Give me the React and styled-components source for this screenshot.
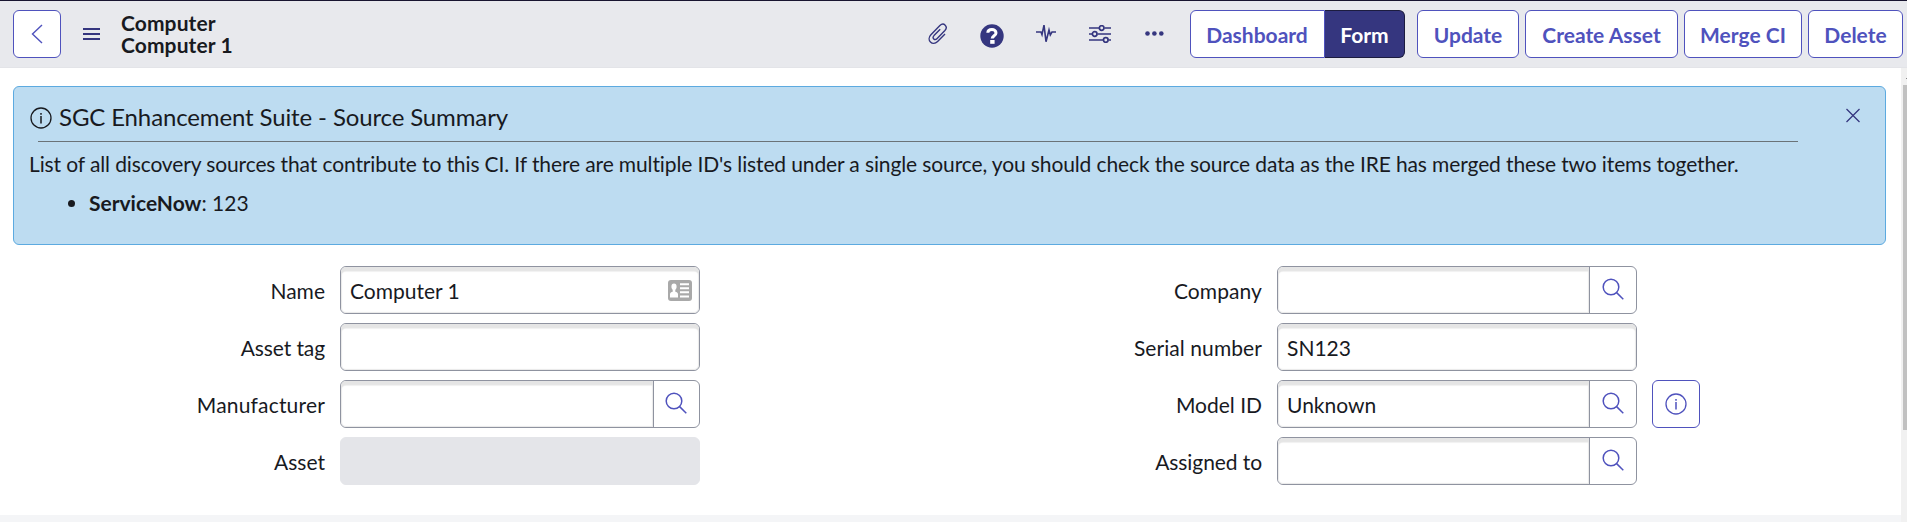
import React from "react";
import styled, { createGlobalStyle, css } from "styled-components";

const GlobalStyle = createGlobalStyle`
  * { box-sizing: border-box; }
  html, body { margin: 0; height: 522px; overflow: hidden; background: #fff; }
  body { font-family: Lato, "Liberation Sans", sans-serif; font-size: 21px; color: #181a1f; }
  button, input { font: inherit; color: inherit; margin: 0; outline: none; }
  svg { display: block; flex: none; }
`;

const Page = styled.div`
  height: 522px;
  display: flex;
  flex-direction: column;
`;

const Header = styled.header`
  height: 68px;
  flex: none;
  display: flex;
  align-items: flex-start;
  padding: 9px 4px 0 13px;
  background: #e8e9ed;
  border-top: 1px solid #181530;
  border-bottom: 1px solid #e3e4e8;
`;

const buttonBase = css`
  height: 48px;
  border: 1px solid #4f52bd;
  border-radius: 6px;
  background: #fff;
  color: #4f52bd;
  padding: 0;
  display: flex;
  align-items: center;
  justify-content: center;
`;

const IconButton = styled.button`
  ${buttonBase}
  width: 48px;
`;

const ActionButton = styled.button`
  ${buttonBase}
  width: ${(p) => p.$width}px;
  padding-top: 1px;
  font-weight: 700;
  white-space: nowrap;
`;

const TabButton = styled(ActionButton)`
  ${(p) =>
    p.$active
      ? css`
          background: #35367f;
          border-color: #1c1c3f;
          border-left-width: 0;
          color: #fff;
          border-radius: 0 6px 6px 0;
        `
      : css`
          border-radius: 6px 0 0 6px;
          padding-right: 1px;
        `}
`;

const MenuButton = styled.div`
  margin: 17px 0 0 22px;
  color: #35367f;
`;

const Title = styled.h1`
  margin: 2px 0 0 21px;
  font-size: 21px;
  line-height: 22px;
  letter-spacing: 0.1px;
  font-weight: 700;
  flex: 1;
`;

const Tools = styled.div`
  height: 48px;
  display: flex;
  align-items: flex-start;
  color: #35367f;
  margin-right: 27px;
`;

const Tabs = styled.div`
  display: flex;
  margin-right: 12px;
`;

const Actions = styled.div`
  display: flex;
  gap: 6px;
`;

const Tool = styled.div`
  width: ${(p) => p.$width || 24}px;
  margin-left: ${(p) => p.$gap}px;
  padding-top: ${(p) => p.$top}px;
`;

const Body = styled.div`
  flex: 1;
  min-height: 0;
  display: flex;
`;

const Content = styled.main`
  flex: 1;
  display: flex;
  flex-direction: column;
  padding: 18px 0 0;
`;

const ScrollTrack = styled.div`
  width: 6px;
  background: #f1f1f1;
  padding-left: 2px;
`;

const ScrollArrow = styled.div`
  width: 1px;
  height: 1px;
  margin: 10px 0 6px 3px;
  background: #8a8a8a;
`;

const ScrollThumb = styled.div`
  height: 345px;
  background: #c1c1c1;
`;

const Alert = styled.section`
  margin: 0 15px 0 13px;
  height: 159px;
  border: 1px solid #5caae0;
  border-radius: 6px;
  background: #bddcf1;
  display: flex;
  justify-content: space-between;
  padding: 0 25px 0 16px;
`;

const AlertText = styled.div`
  width: 1768px;
`;

const AlertTitle = styled.h2`
  margin: 0;
  height: 54px;
  padding-top: 7px;
  display: flex;
  align-items: center;
  gap: 7px;
  font-weight: 400;
  font-size: 24px;
  line-height: 30px;
  letter-spacing: -0.13px;
  white-space: nowrap;
`;

const TitleLabel = styled.span`
  margin-top: -1px;
`;

const Rule = styled.div`
  margin-left: 8px;
  height: 1px;
  background: #6b7378;
`;

const AlertBody = styled.p`
  margin: 8px 0 0 -1px;
  line-height: 28px;
  letter-spacing: -0.12px;
  white-space: nowrap;
`;

const SourceList = styled.ul`
  margin: 11px 0 0;
  padding-left: 59px;
  line-height: 28px;
`;

const Close = styled.div`
  padding-top: 21px;
  color: #35367f;
`;

const Form = styled.form`
  flex: 1;
  display: flex;
  padding-top: 21px;
`;

const Column = styled.div`
  width: 937px;
  display: flex;
  flex-direction: column;
  gap: 9px;
`;

const Row = styled.div`
  height: 48px;
  display: flex;
`;

const Label = styled.label`
  width: 325px;
  margin-right: 15px;
  padding-top: 2px;
  line-height: 46px;
  letter-spacing: ${(p) => p.$tracking || 0}px;
  text-align: right;
`;

const Field = styled.div`
  width: 360px;
  height: 48px;
  display: flex;
  align-items: stretch;
  border: 1px solid ${(p) => (p.$disabled ? "#e4e5e9" : "#8f93a0")};
  border-radius: 6px;
  background: ${(p) => (p.$disabled ? "#e4e5e9" : "#fff")};
  overflow: hidden;
`;

const InputArea = styled.div`
  flex: 1;
  display: flex;
  align-items: center;
  padding: 1px 7px 0 9px;
  border-radius: ${(p) => (p.$lookup ? "5px 0 0 5px" : "5px")};
  box-shadow: ${(p) => (p.$disabled ? "none" : "inset 0 4.5px 1px #e5e5e5, inset 0 0 1px 1px #e9e9e9")};
`;

const Value = styled.span`
  flex: 1;
`;

const Lookup = styled.div`
  width: ${(p) => p.$width}px;
  border-left: 1px solid #8f93a0;
  color: #4f52bd;
  padding: 11px 12px 0 0;
  display: flex;
  justify-content: flex-end;
`;

const Side = styled.div`
  margin-left: 15px;
`;

const Footer = styled.div`
  height: 7px;
  background: #f4f5f7;
`;

const Stroke = ({ w, h, sw = 1.4, children }) => (
  <svg width={w} height={h} viewBox={`0 0 ${w} ${h}`} fill="none" stroke="currentColor" strokeWidth={sw}>
    {children}
  </svg>
);

const InfoIcon = () => (
  <Stroke w={22} h={22} sw={1.3}>
    <circle cx="11" cy="11" r="10" />
    <path d="M11 9v7.5M11 6v1.8" strokeWidth="1.5" />
  </Stroke>
);

const SearchIcon = () => (
  <Stroke w={22} h={22} sw={1.5}>
    <circle cx="9" cy="9" r="7.8" />
    <path d="M14.6 14.6L21.3 21.3" />
  </Stroke>
);

const CardIcon = () => (
  <svg width="24" height="21" viewBox="0 0 24 21">
    <rect width="24" height="21" rx="3" fill="#a9a9a9" />
    <g fill="#fff">
      <ellipse cx="6" cy="6.7" rx="2.6" ry="3.1" />
      <path d="M2 17.5v-3.2c0-1.6 1.4-2.2 2.7-2.6V9h2.6v2.7c1.3.4 2.7 1 2.7 2.6v3.2z" />
      <path d="M12 3.3h9v2h-9zM12 7.3h9v2h-9zM12 11.3h9v2h-9zM12 15.4h9v2h-9z" />
    </g>
  </svg>
);

const FormRow = ({ label, tracking, value, lookup, disabled, card, info }) => (
  <Row>
    <Label $tracking={tracking}>{label}</Label>
    <Field $disabled={disabled}>
      <InputArea $lookup={!!lookup} $disabled={disabled}>
        <Value>{value}</Value>
        {card && <CardIcon />}
      </InputArea>
      {lookup && (
        <Lookup $width={lookup}>
          <SearchIcon />
        </Lookup>
      )}
    </Field>
    {info && (
      <Side>
        <IconButton type="button">
          <InfoIcon />
        </IconButton>
      </Side>
    )}
  </Row>
);

export default function App() {
  return (
    <Page>
      <GlobalStyle />
      <Header>
        <IconButton>
          <Stroke w={12} h={20}>
            <path d="M11 1L1.5 10L11 19" />
          </Stroke>
        </IconButton>
        <MenuButton>
          <Stroke w={17} h={13} sw={2}>
            <path d="M0 2h17M0 7h17M0 12h17" />
          </Stroke>
        </MenuButton>
        <Title>
          Computer
          <br />
          Computer 1
        </Title>
        <Tools>
          <Tool $width={20} $gap={0} $top={13}>
            <Stroke w={20} h={22} sw={1.4}>
              <path d="M12.2 6.2L6 12.6c-2.4 2.6.8 5.2 2.9 3.1l8-8.2c3.6-4-1.2-8.6-5-4.9L2.9 11.7c-5 5.4 1.6 11.8 6.7 6.8L17 11" />
            </Stroke>
          </Tool>
          <Tool $width={24} $gap={32} $top={14}>
            <svg width="24" height="24" viewBox="0 0 24 24">
              <circle cx="12" cy="12" r="11.7" fill="currentColor" />
              <path d="M7.8 8.7C8 4.5 16 4.4 16 8.9c0 2.7-3.8 2.9-3.8 5.6" fill="none" stroke="#fff" strokeWidth="3" />
              <rect x="10.2" y="16" width="4.4" height="3.8" fill="#fff" />
            </svg>
          </Tool>
          <Tool $width={20} $gap={32} $top={14}>
            <Stroke w={20} h={20} sw={1.6}>
              <path d="M0 8h5l1 2.6L8 1.200l2 16.500 3-11.700 1.300 5 1.700-3h4" />
            </Stroke>
          </Tool>
          <Tool $width={22} $gap={33} $top={15}>
            <Stroke w={22} h={18} sw={1.7}>
              <path d="M0 3h10M15.500 3h6.500M0 9h3M8.500 9H22M0 15h14M19.500 15H22" />
              <circle cx="12.700" cy="3" r="2.300" />
              <circle cx="5.700" cy="9" r="2.300" />
              <circle cx="16.800" cy="15" r="2.300" />
            </Stroke>
          </Tool>
          <Tool $width={18} $gap={34} $top={21}>
            <svg width="19" height="5" viewBox="0 0 19 5" fill="currentColor">
              <circle cx="2.500" cy="2.500" r="2.300" />
              <circle cx="9.400" cy="2.500" r="2.300" />
              <circle cx="16.300" cy="2.500" r="2.300" />
            </svg>
          </Tool>
        </Tools>
        <Tabs>
          <TabButton $width={135}>Dashboard</TabButton>
          <TabButton $width={80} $active>
            Form
          </TabButton>
        </Tabs>
        <Actions>
          <ActionButton $width={102}>Update</ActionButton>
          <ActionButton $width={153}>Create Asset</ActionButton>
          <ActionButton $width={118}>Merge CI</ActionButton>
          <ActionButton $width={95}>Delete</ActionButton>
        </Actions>
      </Header>
      <Body>
        <Content>
          <Alert>
            <AlertText>
              <AlertTitle>
                <InfoIcon />
                <TitleLabel>SGC Enhancement Suite - Source Summary</TitleLabel>
              </AlertTitle>
              <Rule />
              <AlertBody>
                List of all discovery sources that contribute to this CI. If there are multiple ID's listed under a
                single source, you should check the source data as the IRE has merged these two items together.
              </AlertBody>
              <SourceList>
                <li>
                  <b>ServiceNow</b>: 123
                </li>
              </SourceList>
            </AlertText>
            <Close>
              <Stroke w={14} h={15} sw={1.3}>
                <path d="M.5 1L13.500 14M13.500 1L.5 14" />
              </Stroke>
            </Close>
          </Alert>
          <Form>
            <Column>
              <FormRow label="Name" value="Computer 1" card />
              <FormRow label="Asset tag" tracking={-0.1} />
              <FormRow label="Manufacturer" tracking={0.18} lookup={46} />
              <FormRow label="Asset" disabled />
            </Column>
            <Column>
              <FormRow label="Company" tracking={0.08} lookup={47} />
              <FormRow label="Serial number" tracking={0.08} value="SN123" />
              <FormRow label="Model ID" value="Unknown" lookup={47} info />
              <FormRow label="Assigned to" tracking={-0.08} lookup={47} />
            </Column>
          </Form>
          <Footer />
        </Content>
        <ScrollTrack>
          <ScrollArrow />
          <ScrollThumb />
        </ScrollTrack>
      </Body>
    </Page>
  );
}
